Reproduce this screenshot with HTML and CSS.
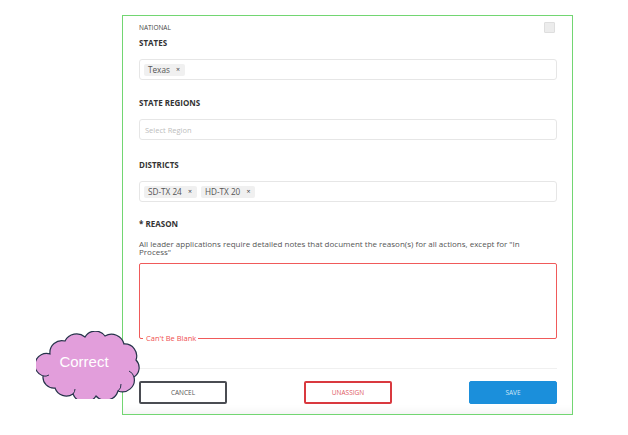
FILE: index.html
```html
<!DOCTYPE html>
<html>
<head>
<meta charset="utf-8">
<link rel="stylesheet" href="styles.css">
</head>
<body>
<div class="frame">
  <div class="head">
    <span class="national">NATIONAL</span>
    <span class="checkbox"></span>
  </div>
  <div class="label first">STATES</div>
  <div class="field">
    <span class="chip">Texas <span class="x">×</span></span>
  </div>
  <div class="label regions">STATE REGIONS</div>
  <div class="field"><span class="placeholder">Select Region</span></div>
  <div class="label districts">DISTRICTS</div>
  <div class="field">
    <span class="chip">SD-TX 24 <span class="x">×</span></span>
    <span class="chip">HD-TX 20 <span class="x">×</span></span>
  </div>
  <div class="label reason">* REASON</div>
  <p class="helper">All leader applications require detailed notes that document the reason(s) for all actions, except for "In Process"</p>
  <div class="textarea">
    <span class="error">Can't Be Blank</span>
  </div>
  <div class="divider"></div>
  <div class="actions">
    <button class="btn cancel">CANCEL</button>
    <button class="btn unassign">UNASSIGN</button>
    <button class="btn save">SAVE</button>
  </div>
</div>
<svg class="cloud" width="106" height="68" viewBox="0 0 106 68">
  <path d="M14,23 A12,12 0 0 1 29,10 A13,13 0 0 1 49,6 A12,12 0 0 1 69,5 A13,13 0 0 1 88,13 A12,12 0 0 1 100,29 A11,11 0 0 1 98,46 A12,12 0 0 1 82,60 A13,13 0 0 1 60,65 A13,13 0 0 1 37,63 A12,12 0 0 1 19,57 A11,11 0 0 1 7,45 A10,10 0 0 1 14,23 Z" fill="#e29edb" stroke="#26334a" stroke-width="1.2"/>
  <path d="M82,60 A8,8 0 0 0 85,53 M98,46 A9,9 0 0 0 93,40 M37,63 A8,8 0 0 0 39,58 M7,45 A8,8 0 0 0 13,44" fill="none" stroke="#26334a" stroke-width="1"/>
  <text x="48" y="36" text-anchor="middle" class="cloud-text">Correct</text>
</svg>
</body>
</html>
```
FILE: styles.css
```css
html, body {
  margin: 0;
  padding: 0;
  background: #fff;
}
body {
  width: 628px;
  height: 435px;
  position: relative;
  font-family: "Open Sans", "Noto Sans", sans-serif;
  color: #444;
}
.frame {
  box-sizing: border-box;
  margin: 15px 0 0 122px;
  width: 451px;
  height: 400px;
  border: 1px solid #72d672;
  padding: 6px 15px 0 16px;
  box-shadow: inset 0 -10px 10px -8px rgba(0,0,0,0.06);
}
.head {
  display: flex;
  justify-content: space-between;
  align-items: flex-start;
  height: 11px;
}
.national {
  font-size: 6.5px;
  line-height: 8px;
  margin-top: 2px;
  color: #444;
}
.checkbox {
  box-sizing: border-box;
  width: 11px;
  height: 11px;
  margin-right: 2px;
  background: #ececec;
  border: 1px solid #dedede;
  border-radius: 1px;
}
.label {
  font-size: 8px;
  font-weight: 700;
  line-height: 10px;
  color: #333;
  margin-bottom: 11px;
}
.label.first { margin-top: 5px; }
.label.regions { margin-top: 18px; }
.label.districts { margin-top: 20px; }
.label.reason { margin-top: 17px; margin-bottom: 0; }
.field {
  box-sizing: border-box;
  height: 21px;
  border: 1px solid #e6e6e6;
  border-radius: 3px;
  display: flex;
  align-items: center;
  padding: 0 4px;
  gap: 4px;
}
.chip {
  display: inline-flex;
  align-items: center;
  height: 12px;
  padding: 0 5px 0 4px;
  background: #f0f0f0;
  border-radius: 2px;
  font-size: 8.2px;
  color: #555;
  white-space: pre;
}
.chip .x {
  font-size: 7px;
  margin-left: 4px;
  color: #444;
}
.placeholder {
  font-size: 7.5px;
  color: #bdbdbd;
  padding-left: 1px;
}
.helper {
  margin: 11px 0 0 0;
  font-size: 8px;
  line-height: 8px;
  color: #555;
  width: 400px;
}
.textarea {
  box-sizing: border-box;
  position: relative;
  margin-top: 7px;
  height: 76px;
  border: 1px solid #f05a5a;
  border-radius: 2px;
}
.error {
  position: absolute;
  left: 3px;
  bottom: -4px;
  background: #fff;
  padding: 0 2px 0 3px;
  font-size: 7.5px;
  line-height: 8px;
  color: #ef4f4f;
}
.divider {
  margin: 29px 0 0 -16px;
  height: 1px;
  background: #f0f0f0;
}
.actions {
  display: flex;
  justify-content: space-between;
  margin-top: 12px;
}
.btn {
  box-sizing: border-box;
  width: 88px;
  height: 23px;
  border-radius: 2px;
  font-family: "Open Sans", "Noto Sans", sans-serif;
  font-size: 6.5px;
  padding: 0;
  background: #fff;
  cursor: pointer;
}
.cancel {
  border: 2px solid #4a4c52;
  color: #555;
}
.unassign {
  border: 2px solid #d9393f;
  color: #e05a5f;
}
.save {
  border: 1px solid #1b8fdb;
  background: #1b8fdb;
  color: #cfe6f7;
}
.cloud {
  position: absolute;
  left: 36px;
  top: 331px;
}
.cloud-text {
  font-family: "Liberation Sans", Arial, sans-serif;
  font-size: 15px;
  fill: #fff;
}
```
